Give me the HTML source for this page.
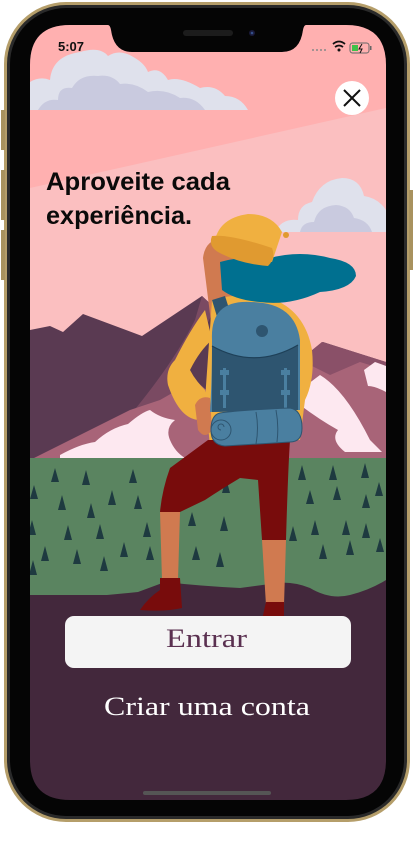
<!DOCTYPE html>
<html><head><meta charset="utf-8"><style>
html,body{margin:0;padding:0;background:#fff;width:414px;height:842px;overflow:hidden}
svg{display:block}
text{font-family:"Liberation Sans",sans-serif}
</style></head><body>
<svg width="414" height="842" viewBox="0 0 414 842" xmlns="http://www.w3.org/2000/svg">
<defs>
<clipPath id="scr"><path d="M70 25 H108 Q110 25 111 30 Q114 52 132 52 H282 Q300 52 303 30 Q304 25 306 25 H346 Q386 25 386 65 V760 Q386 800 346 800 H70 Q30 800 30 760 V65 Q30 25 70 25 Z"/></clipPath>
</defs>
<rect x="4" y="2" width="406" height="820" rx="62" fill="#b59e6a"/>
<rect x="7" y="5" width="400" height="814" rx="59" fill="#2a2a2a"/>
<rect x="10" y="8" width="394" height="808" rx="56" fill="#050505"/>
<rect x="1" y="110" width="4" height="40" fill="#a8925e"/>
<rect x="1" y="170" width="4" height="50" fill="#a8925e"/>
<rect x="1" y="230" width="4" height="50" fill="#a8925e"/>
<rect x="409" y="190" width="4" height="80" fill="#a8925e"/>
<g clip-path="url(#scr)">
<rect x="30" y="25" width="356" height="775" fill="#43283c"/>
<rect x="30" y="25" width="356" height="300" fill="#ffb0b0"/>
<polygon points="30,188 386,108 386,460 30,460" fill="#fbbfc0"/>
<path d="M30 110 L30 82 Q40 76 50 80 Q52 56 80 52 Q100 46 108 56 Q120 48 135 58 Q145 64 148 72 Q160 66 168 80 Q180 76 200 88 Q215 84 225 96 Q240 96 248 110 Z" fill="#dfe1ec"/>
<path d="M38 110 Q45 98 58 100 Q58 86 72 88 Q80 74 98 76 Q112 74 120 84 Q135 82 148 92 Q165 88 180 98 Q195 96 205 110 Z" fill="#c9cadf"/>
<path d="M275 232 Q282 218 298 220 Q298 205 312 202 Q320 180 342 178 Q360 178 364 196 Q378 198 386 210 V232 Z" fill="#dfe1ec"/>
<path d="M300 232 Q302 222 314 222 Q318 206 336 205 Q350 206 354 218 Q368 220 372 232 Z" fill="#c9cadf"/>
<path d="M30 330 L50 326 L63 332 L83 314 L142 336 L202 296 L215 308 L250 300 L300 360 L323 342 L386 362 V460 H30 Z" fill="#5a3a52"/>
<path d="M136 408 Q175 360 195 320 L202 296 L215 308 Q180 380 160 420 Z" fill="#7a4a62"/>
<path d="M30 460 L130 410 L160 400 L195 380 L240 420 L300 360 L322 342 L386 362 V460 Z" fill="#a86478"/>
<path d="M300 360 L322 342 L386 362 V370 L360 362 L330 375 Z" fill="#8a5068"/>
<path d="M60 455 Q80 444 95 442 Q110 428 128 424 Q142 412 150 410 Q160 418 175 420 Q165 428 170 440 Q175 452 185 458 H60 Z" fill="#fde8f0"/>
<path d="M300 390 L320 375 Q345 390 370 440 L382 452 L345 452 Q330 440 338 430 Q320 420 300 405 Z" fill="#fde8f0"/>
<path d="M364 370 L375 362 L386 366 V392 Q375 386 368 386 Z" fill="#fde8f0"/>
<path d="M30 458 H386 V580 Q370 590 350 595 Q330 600 310 588 Q290 580 270 584 L240 588 Q200 586 165 582 L138 592 L107 595 L30 595 Z" fill="#5a8460"/>
<g fill="#1e3a40">
<path d="M55 468l4 14h-8z M86 470l4 15h-8z M133 469l4 14h-8z M302 465l4 15h-8z M333 465l4 15h-8z M365 463l4 15h-8z M34 485l4 14h-8z M62 495l4 15h-8z M91 503l4 15h-8z M112 490l4 15h-8z M138 495l4 14h-8z M310 490l4 14h-8z M337 486l4 14h-8z M366 494l4 14h-8z M379 482l4 14h-8z M32 520l4 15h-8z M68 525l4 15h-8z M100 524l4 15h-8z M147 522l4 15h-8z M293 526l4 15h-8z M315 520l4 15h-8z M346 520l4 15h-8z M366 523l4 15h-8z M45 546l4 15h-8z M77 549l4 15h-8z M124 542l4 15h-8z M150 546l4 14h-8z M323 544l4 15h-8z M350 540l4 15h-8z M380 538l4 14h-8z M104 556l4 15h-8z M33 560l4 15h-8z M206 470l4 14h-8z M226 478l4 15h-8z M224 516l4 15h-8z M220 552l4 15h-8z M192 512l4 14h-8z M196 546l4 14h-8z"/>
</g>
<path d="M203 258 Q205 240 222 238 Q238 236 248 260 L250 330 L212 330 Z" fill="#d07a50"/>
<path d="M205 310 Q190 330 175 360 Q165 370 168 385 Q180 420 200 420 L210 412 L205 390 Q195 380 190 370 Q200 350 212 340 Z" fill="#f0b040"/>
<path d="M212 300 Q240 292 270 298 Q305 310 312 350 Q315 380 305 400 L300 440 L210 445 L205 400 Z" fill="#f0b040"/>
<path d="M195 405 Q200 395 210 398 L212 430 Q205 440 198 430 Z" fill="#d07a50"/>
<path d="M208 440 L290 440 Q288 470 286 540 L262 540 L258 480 L240 478 Q220 490 205 500 L180 512 L160 512 Q162 490 170 468 Z" fill="#780c0c"/>
<path d="M160 512 L180 512 L178 580 L162 580 Z" fill="#d07a50"/>
<path d="M262 540 L286 540 L284 605 L266 605 Z" fill="#d07a50"/>
<path d="M160 578 L180 578 L182 608 Q165 612 140 610 Q148 598 160 590 Z" fill="#780c0c"/>
<path d="M266 602 L284 602 L284 620 L262 620 Z" fill="#780c0c"/>
<path d="M220 262 Q240 256 270 258 Q300 250 330 258 Q356 262 356 276 Q350 290 320 292 Q290 306 260 302 Q235 300 222 290 Z" fill="#007090"/>
<path d="M215 240 Q220 218 248 214 Q272 214 282 232 L272 262 L214 248 Z" fill="#f0b040"/>
<path d="M212 236 Q230 234 272 248 Q276 258 268 266 Q240 264 218 252 Q208 246 212 236 Z" fill="#e09a30"/>
<circle cx="286" cy="235" r="3" fill="#e09a30"/>
<path d="M212 300 L225 296 L232 318 L218 320 Z" fill="#2e5570"/>
<path d="M212 340 Q210 300 250 302 Q295 302 300 340 L300 410 L210 412 Q212 380 212 340 Z" fill="#4a7fa0"/>
<path d="M212 346 Q255 370 298 345 L298 410 L212 412 Z" fill="#2e5570"/>
<path d="M212 346 Q255 370 298 345" stroke="#1e4058" stroke-width="1.2" fill="none"/>
<circle cx="262" cy="331" r="6" fill="#2e5570"/>
<rect x="223" y="368" width="3" height="40" fill="#4a7fa0"/><rect x="220" y="370" width="9" height="5" fill="#4a7fa0"/><rect x="220" y="390" width="9" height="5" fill="#4a7fa0"/>
<rect x="284" y="368" width="3" height="40" fill="#4a7fa0"/><rect x="281" y="370" width="9" height="5" fill="#4a7fa0"/><rect x="281" y="390" width="9" height="5" fill="#4a7fa0"/>
<path d="M220 413 Q240 410 290 408 Q302 410 302 428 Q302 442 290 442 L225 446 Q211 445 211 430 Q211 415 220 413 Z" fill="#4a7fa0" stroke="#2e5570" stroke-width="1"/>
<circle cx="221" cy="430" r="10" fill="#4a7fa0" stroke="#2e5570" stroke-width="1"/>
<path d="M221 430 a3 3 0 1 1 3 -3 M256 412 Q259 428 256 444 M276 410 Q279 426 277 442" stroke="#2e5570" stroke-width="1" fill="none"/>
<rect x="65" y="616" width="286" height="52" rx="9" fill="#f4f4f4"/>
<text x="166" y="647" font-size="26" fill="#5a3050" textLength="81" lengthAdjust="spacingAndGlyphs" style="font-family:'Liberation Serif',serif">Entrar</text>
<text x="104" y="715" font-size="26" fill="#fff" textLength="206" lengthAdjust="spacingAndGlyphs" style="font-family:'Liberation Serif',serif">Criar uma conta</text>
<rect x="143" y="791" width="128" height="4" rx="2" fill="#555"/>
<text x="46" y="190" font-size="25" font-weight="bold" fill="#0a0a0a" textLength="184" lengthAdjust="spacingAndGlyphs">Aproveite cada</text>
<text x="46" y="224" font-size="25" font-weight="bold" fill="#0a0a0a" textLength="146" lengthAdjust="spacingAndGlyphs">experiência.</text>
<circle cx="352" cy="98" r="17" fill="#fff"/>
<path d="M344 90 L360 106 M360 90 L344 106" stroke="#111" stroke-width="2"/>
<text x="58" y="51" font-size="13" font-weight="bold" fill="#111">5:07</text>
<g fill="#888"><circle cx="313" cy="50" r="1"/><circle cx="317" cy="50" r="1"/><circle cx="321" cy="50" r="1"/><circle cx="325" cy="50" r="1"/></g>
<path d="M333 44 Q339 39 345 44 M335 47 Q339 44 343 47" stroke="#111" stroke-width="1.8" fill="none"/><circle cx="339" cy="50" r="1.5" fill="#111"/>
<rect x="350" y="43" width="19" height="10" rx="2.5" fill="none" stroke="#666" stroke-width="1"/>
<rect x="352" y="45" width="6" height="6" fill="#3fc14a"/>
<path d="M362 44 L359 49 H362 L360 53" stroke="#111" stroke-width="1" fill="none"/>
<rect x="370" y="46" width="1.5" height="4" fill="#666"/>
</g>
<rect x="183" y="30" width="50" height="6" rx="3" fill="#1c1c1c"/>
<circle cx="252" cy="33" r="3" fill="#1a1a3a"/><circle cx="252" cy="33" r="1.3" fill="#34508a"/>
</svg>
</body></html>
